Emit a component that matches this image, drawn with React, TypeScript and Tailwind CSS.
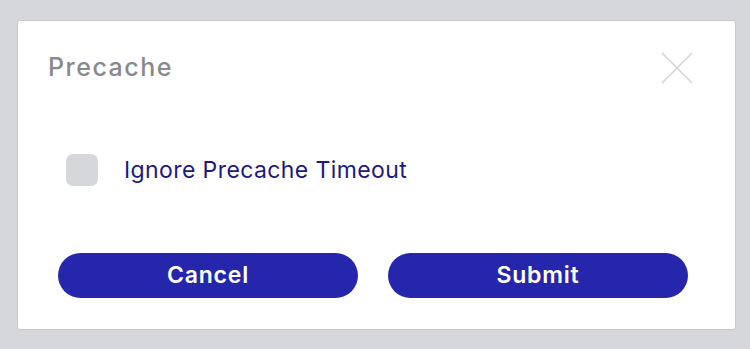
import React, { useState } from 'react';

const App: React.FC = () => {
  const [ignore, setIgnore] = useState(false);

  return (
    <div className="w-[750px] h-[349px] bg-[#d6d7db] pt-[20px] pl-[17px] font-['Inter',sans-serif]">
      <div className="w-[719px] h-[310px] bg-white border border-[#c6c7cb] rounded-[3px] flex flex-col">
        <div className="flex items-start justify-between pl-[30px] pr-[42px] pt-[31px]">
          <h2 className="text-[25px] leading-[30px] font-medium text-[#8a8a8a] tracking-[1.5px]">Precache</h2>
          <button className="w-[32px] h-[32px] flex items-center justify-center" aria-label="Close">
            <svg width="32" height="32" viewBox="0 0 32 32" fill="none" stroke="#d4d4d4" strokeWidth="1.6">
              <path d="M1 1 L31 31 M31 1 L1 31" />
            </svg>
          </button>
        </div>

        <label className="flex items-center gap-[26px] pl-[48px] mt-[70px] cursor-pointer">
          <span
            onClick={() => setIgnore(!ignore)}
            className="w-[32px] h-[32px] rounded-[7px] bg-[#d6d7db] shrink-0"
          />
          <span className="text-[23px] leading-[28px] text-[#1c1a80] tracking-[0.4px]">Ignore Precache Timeout</span>
        </label>

        <div className="flex gap-[30px] pl-[40px] mt-[67px]">
          <button className="w-[300px] h-[45px] rounded-full bg-[#2626ad] text-white text-[23px] font-semibold tracking-[0.8px]">Cancel</button>
          <button className="w-[300px] h-[45px] rounded-full bg-[#2626ad] text-white text-[23px] font-semibold tracking-[0.8px]">Submit</button>
        </div>
      </div>
    </div>
  );
};

export default App;
